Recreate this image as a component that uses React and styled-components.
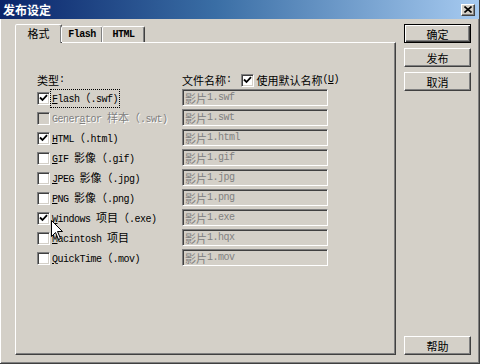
import React from 'react'
import styled, { createGlobalStyle } from 'styled-components'

const FACE = '#D4D0C8'

const GlobalStyle = createGlobalStyle`
  html, body { margin: 0; padding: 0; background: ${FACE}; }
  body {
    font-family: "Noto Sans CJK SC", sans-serif;
    font-size: 11px;
    color: #000;
  }
`

const Window = styled.div`
  width: 480px;
  height: 364px;
  box-sizing: border-box;
  display: flex;
  flex-direction: column;
  background: ${FACE};
  border-right: 1px solid #404040;
  border-bottom: 1px solid #404040;
  box-shadow: inset 1px 0 #fff, inset -1px -1px #808080;
`

const TitleBar = styled.div`
  height: 19px;
  flex-shrink: 0;
  display: flex;
  align-items: center;
  justify-content: space-between;
  padding: 0 4px 0 3px;
  background: linear-gradient(to right, #0a246a 0%, #3a6ea5 45%, #a6caf0 100%);
`

const Title = styled.span`
  color: #fff;
  font-weight: bold;
  font-size: 12px;
  line-height: 14px;
`

const CloseBox = styled.span`
  width: 14px;
  height: 12px;
  box-sizing: border-box;
  display: flex;
  align-items: center;
  justify-content: center;
  background: ${FACE};
  border: 1px solid;
  border-color: #fff #404040 #404040 #fff;
  box-shadow: inset -1px -1px #808080;
`

const Body = styled.div`
  flex: 1;
  display: flex;
  padding: 5px 7px 8px 15px;
  min-height: 0;
`

const Left = styled.div`
  width: 381px;
  display: flex;
  flex-direction: column;
`

const TabStrip = styled.div`
  height: 18px;
  display: flex;
  align-items: flex-end;
  position: relative;
  z-index: 1;
`

const Tab = styled.div`
  width: ${p => p.$w}px;
  height: ${p => (p.$active ? 19 : 16)}px;
  box-sizing: border-box;
  margin-bottom: ${p => (p.$active ? -1 : 0)}px;
  margin-left: ${p => (p.$active ? 0 : -1)}px;
  display: flex;
  align-items: center;
  justify-content: center;
  padding-bottom: ${p => (p.$active ? 2 : 0)}px;
  background: ${FACE};
  border: 1px solid;
  border-bottom: none;
  border-color: #fff #404040 transparent #fff;
  border-radius: 2px 2px 0 0;
  box-shadow: inset -1px 0 #808080;
  font-weight: ${p => (p.$active ? 'normal' : 'bold')};
`

const Panel = styled.div`
  flex: 1;
  position: relative;
  box-sizing: border-box;
  border: 1px solid;
  border-color: #fff #404040 #404040 #fff;
  box-shadow: inset -1px -1px #808080;
  padding: 29px 0 0 21px;
`

const Grid = styled.div`
  display: grid;
  grid-template-columns: 15px 130px 146px;
  grid-template-rows: 16px;
  grid-auto-rows: 20px;
  align-items: center;
`

const HeadCell = styled.div`
  grid-column: ${p => p.$col};
  display: flex;
  align-items: center;
  white-space: nowrap;
  line-height: 14px;
  min-width: 0;
  & > * { flex-shrink: 0; }
`

const Gap = styled.span`
  display: inline-block;
  width: ${p => p.$w}px;
`

const Box = styled.span`
  width: 13px;
  height: 13px;
  box-sizing: border-box;
  display: flex;
  align-items: center;
  justify-content: center;
  background: ${p => (p.$disabled ? FACE : '#fff')};
  border: 1px solid;
  border-color: #808080 #fff #fff #808080;
  box-shadow: inset 1px 1px #404040, inset -1px -1px ${FACE};
`

const Label = styled.span`
  justify-self: start;
  white-space: nowrap;
  line-height: 14px;
  padding: 0 1px;
  margin-left: -1px;
  color: ${p => (p.$disabled ? '#808080' : '#000')};
  text-shadow: ${p => (p.$disabled ? '1px 1px #fff' : 'none')};
  outline: ${p => (p.$focus ? '1px dotted #000' : 'none')};
`

const Field = styled.div`
  align-self: start;
  margin-top: 1px;
  width: 146px;
  height: 17px;
  box-sizing: border-box;
  display: flex;
  align-items: center;
  padding-left: 2px;
  color: #808080;
  white-space: nowrap;
  line-height: 14px;
  border: 1px solid;
  border-color: #808080 #fff #fff #808080;
  box-shadow: inset 1px 1px #404040, inset -1px -1px ${FACE};
`

const Han = styled.span`
  font-family: "Noto Sans CJK SC", sans-serif;
  font-size: 11px;
  line-height: 14px;
`

const Lat = styled.span`
  font-family: "Liberation Mono", "DejaVu Sans Mono", monospace;
  font-size: 10px;
  letter-spacing: -0.5px;
  line-height: 14px;
  white-space: pre;
`

const Cursor = styled.svg`
  position: absolute;
  left: 35px;
  top: 177px;
`

const Buttons = styled.div`
  margin-left: 8px;
  width: 67px;
  display: flex;
  flex-direction: column;
  gap: 5px;
`

const Button = styled.div`
  height: 19px;
  box-sizing: border-box;
  display: flex;
  align-items: center;
  justify-content: center;
  background: ${FACE};
  border: 1px solid;
  border-color: ${p => (p.$default ? '#000' : '#fff #404040 #404040 #fff')};
  box-shadow: ${p =>
    p.$default
      ? 'inset 1px 1px #fff, inset -1px -1px #404040, inset -2px -2px #808080'
      : 'inset -1px -1px #808080'};
  margin-top: ${p => (p.$bottom ? 'auto' : '0')};
  line-height: 14px;
`

function Mnemonic({ text }) {
  const parts = text.split(/&(.)/)
  return parts.map((p, i) => (i % 2 ? <u key={i}>{p}</u> : p))
}

function Txt({ children }) {
  const parts = children.split(/([\u3000-\u9fff\uff00-\uffef]+)/)
  return parts.map((p, i) =>
    i % 2 ? (
      <Han key={i}>{p}</Han>
    ) : p ? (
      <Lat key={i}>
        <Mnemonic text={p} />
      </Lat>
    ) : null
  )
}

const Check = () => (
  <svg width="9" height="9" viewBox="0 0 9 9">
    <polyline points="1,3.5 3.5,6 8,1.2" fill="none" stroke="#000" strokeWidth="1.8" />
  </svg>
)

const rows = [
  { label: '&Flash（.swf)', file: '影片1.swf', checked: true, focus: true },
  { label: 'Gener&ator 样本（.swt)', file: '影片1.swt', disabled: true },
  { label: '&HTML（.html)', file: '影片1.html', checked: true },
  { label: '&GIF 影像（.gif)', file: '影片1.gif' },
  { label: '&JPEG 影像（.jpg)', file: '影片1.jpg' },
  { label: '&PNG 影像（.png)', file: '影片1.png' },
  { label: '&Windows 项目（.exe)', file: '影片1.exe', checked: true },
  { label: '&Macintosh 项目', file: '影片1.hqx' },
  { label: '&QuickTime（.mov)', file: '影片1.mov' },
]

export default function App() {
  return (
    <Window>
      <GlobalStyle />
      <TitleBar>
        <Title>发布设定</Title>
        <CloseBox>
          <svg width="8" height="7" viewBox="0 0 8 7">
            <path d="M0.5 0.5 L7.5 6.5 M7.5 0.5 L0.5 6.5" stroke="#000" strokeWidth="1.6" />
          </svg>
        </CloseBox>
      </TitleBar>
      <Body>
        <Left>
          <TabStrip>
            <Tab $active $w={47}><Txt>格式</Txt></Tab>
            <Tab $w={42}><Txt>Flash</Txt></Tab>
            <Tab $w={43}><Txt>HTML</Txt></Tab>
          </TabStrip>
          <Panel>
            <Grid>
              <HeadCell $col="1 / 3"><Txt>类型:</Txt></HeadCell>
              <HeadCell $col="3 / 4">
                <Txt>文件名称:</Txt>
                <Gap $w={9} />
                <Box><Check /></Box>
                <Gap $w={3} />
                <Txt>使用默认名称(&U)</Txt>
              </HeadCell>
              {rows.map(r => (
                <React.Fragment key={r.file}>
                  <Box $disabled={r.disabled}>{r.checked && <Check />}</Box>
                  <Label $disabled={r.disabled} $focus={r.focus}>
                    <Txt>{r.label}</Txt>
                  </Label>
                  <Field><Txt>{r.file}</Txt></Field>
                </React.Fragment>
              ))}
            </Grid>
            <Cursor width="12" height="20" viewBox="0 0 12 20">
              <path
                d="M0.5 0.5 L0.5 16.5 L4.5 12.5 L7.5 19.5 L9.5 18.5 L6.5 11.5 L11.5 11.5 Z"
                fill="#fff"
                stroke="#000"
                strokeWidth="1"
              />
            </Cursor>
          </Panel>
        </Left>
        <Buttons>
          <Button $default><Txt>确定</Txt></Button>
          <Button><Txt>发布</Txt></Button>
          <Button><Txt>取消</Txt></Button>
          <Button $bottom><Txt>帮助</Txt></Button>
        </Buttons>
      </Body>
    </Window>
  )
}
